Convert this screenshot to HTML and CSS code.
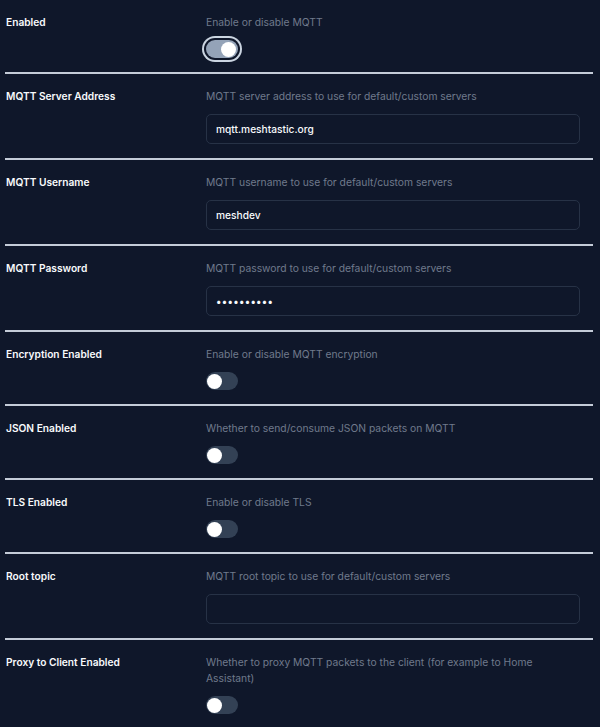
FILE: index.html
```html
<!DOCTYPE html>
<html>
<head>
<meta charset="utf-8">
<link rel="stylesheet" href="styles.css">
</head>
<body>
<div class="page">
  <div class="row first">
    <div class="label">Enabled</div>
    <div class="field">
      <div class="desc">Enable or disable MQTT</div>
      <div class="switch on focus"><span class="thumb"></span></div>
    </div>
  </div>
  <div class="row">
    <div class="label">MQTT Server Address</div>
    <div class="field">
      <div class="desc">MQTT server address to use for default/custom servers</div>
      <div class="input">mqtt.meshtastic.org</div>
    </div>
  </div>
  <div class="row">
    <div class="label">MQTT Username</div>
    <div class="field">
      <div class="desc">MQTT username to use for default/custom servers</div>
      <div class="input">meshdev</div>
    </div>
  </div>
  <div class="row">
    <div class="label">MQTT Password</div>
    <div class="field">
      <div class="desc">MQTT password to use for default/custom servers</div>
      <div class="input dots">••••••••••</div>
    </div>
  </div>
  <div class="row">
    <div class="label">Encryption Enabled</div>
    <div class="field">
      <div class="desc">Enable or disable MQTT encryption</div>
      <div class="switch"><span class="thumb"></span></div>
    </div>
  </div>
  <div class="row">
    <div class="label">JSON Enabled</div>
    <div class="field">
      <div class="desc">Whether to send/consume JSON packets on MQTT</div>
      <div class="switch"><span class="thumb"></span></div>
    </div>
  </div>
  <div class="row">
    <div class="label">TLS Enabled</div>
    <div class="field">
      <div class="desc">Enable or disable TLS</div>
      <div class="switch"><span class="thumb"></span></div>
    </div>
  </div>
  <div class="row">
    <div class="label">Root topic</div>
    <div class="field">
      <div class="desc">MQTT root topic to use for default/custom servers</div>
      <div class="input"></div>
    </div>
  </div>
  <div class="row last">
    <div class="label">Proxy to Client Enabled</div>
    <div class="field">
      <div class="desc">Whether to proxy MQTT packets to the client (for example to Home Assistant)</div>
      <div class="switch"><span class="thumb"></span></div>
    </div>
  </div>
</div>
</body>
</html>
```
FILE: styles.css
```css
html, body {
  margin: 0;
  padding: 0;
  background: #0f172a;
}
body {
  font-family: Inter, "Noto Sans", sans-serif;
  width: 600px;
  height: 727px;
  overflow: hidden;
}
.page {
  padding: 0 7px 0 5px;
}
.row {
  display: grid;
  grid-template-columns: 200px 1fr;
  padding: 14px 13px 14px 1px;
  border-bottom: 2px solid #c4ccd8;
}
.row.last {
  border-bottom: none;
}
.label {
  font-size: 10.2px;
  font-weight: 600;
  color: #f8fafc;
  line-height: 16px;
}
.field {
  display: flex;
  flex-direction: column;
  align-items: flex-start;
  gap: 10px;
}
.desc {
  font-size: 10.3px;
  color: #6f7a8c;
  line-height: 16px;
  padding-right: 40px;
}
.input {
  box-sizing: border-box;
  width: 100%;
  height: 30px;
  border: 1px solid #273246;
  border-radius: 5px;
  padding: 0 9px;
  font-size: 10.2px;
  font-weight: 500;
  color: #f8fafc;
  line-height: 28px;
}
.input.dots {
  letter-spacing: 0.3px;
}
.switch {
  position: relative;
  width: 32px;
  height: 18px;
  border-radius: 9px;
  background: #334155;
  flex: none;
}
.switch .thumb {
  position: absolute;
  top: 2px;
  left: 1px;
  width: 15px;
  height: 15px;
  border-radius: 50%;
  background: #ffffff;
}
.switch.on {
  background: #94a3b8;
}
.switch.on .thumb {
  left: 15px;
}
.switch.focus {
  box-shadow: 0 0 0 2px #0f172a, 0 0 0 4px #cbd5e1;
}
```
